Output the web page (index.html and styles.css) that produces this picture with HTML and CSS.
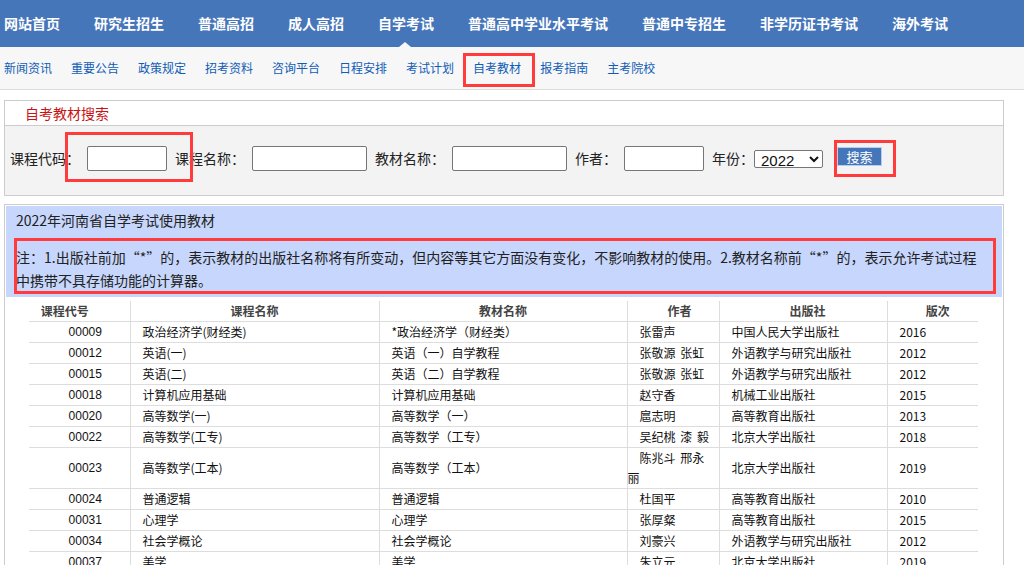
FILE: index.html
```html
<!DOCTYPE html>
<html lang="zh-CN">
<head>
<meta charset="utf-8">
<title>自考教材</title>
<link rel="stylesheet" href="styles.css">
</head>
<body>
<header class="topnav">
  <ul class="topnav-list">
    <li class="topnav-item">网站首页</li>
    <li class="topnav-item">研究生招生</li>
    <li class="topnav-item">普通高招</li>
    <li class="topnav-item">成人高招</li>
    <li class="topnav-item active">自学考试</li>
    <li class="topnav-item">普通高中学业水平考试</li>
    <li class="topnav-item">普通中专招生</li>
    <li class="topnav-item">非学历证书考试</li>
    <li class="topnav-item">海外考试</li>
  </ul>
</header>
<nav class="subnav">
  <a class="subnav-link" href="#">新闻资讯</a>
  <a class="subnav-link" href="#">重要公告</a>
  <a class="subnav-link" href="#">政策规定</a>
  <a class="subnav-link" href="#">招考资料</a>
  <a class="subnav-link" href="#">咨询平台</a>
  <a class="subnav-link" href="#">日程安排</a>
  <a class="subnav-link" href="#">考试计划</a>
  <a class="subnav-link" href="#">自考教材</a>
  <a class="subnav-link" href="#">报考指南</a>
  <a class="subnav-link" href="#">主考院校</a>
</nav>
<main class="content">
  <section class="search-panel">
    <h2 class="panel-title">自考教材搜索</h2>
    <form class="search-form">
      <label class="field-label">课程代码：</label><input class="field field-sm" type="text">
      <label class="field-label">课程名称：</label><input class="field field-lg" type="text">
      <label class="field-label">教材名称：</label><input class="field field-lg" type="text">
      <label class="field-label">作者：</label><input class="field field-sm" type="text">
      <label class="field-label field-label-year">年份：</label><select class="year-select"><option>2022</option><option>2021</option></select>
      <button class="search-btn" type="button">搜索</button>
    </form>
  </section>
  <section class="results">
    <div class="results-info">
      <p class="results-title">2022年河南省自学考试使用教材</p>
      <p class="results-note">注：1.出版社前加“*”的，表示教材的出版社名称将有所变动，但内容等其它方面没有变化，不影响教材的使用。2.教材名称前“*”的，表示允许考试过程<br>中携带不具存储功能的计算器。</p>
    </div>
    <table class="book-table">
      <colgroup>
        <col class="w-code"><col class="w-course"><col class="w-book"><col class="w-author"><col class="w-press"><col class="w-ed">
      </colgroup>
      <thead>
        <tr>
          <th class="th-code">课程代号</th>
          <th>课程名称</th>
          <th>教材名称</th>
          <th class="th-author">作者</th>
          <th class="th-press">出版社</th>
          <th class="th-ed">版次</th>
        </tr>
      </thead>
      <tbody>
        <tr><td class="td-code">00009</td><td>政治经济学(财经类)</td><td>*政治经济学（财经类）</td><td class="td-author">张雷声</td><td>中国人民大学出版社</td><td>2016</td></tr>
        <tr><td class="td-code">00012</td><td>英语(一)</td><td>英语（一）自学教程</td><td class="td-author">张敬源 张虹</td><td>外语教学与研究出版社</td><td>2012</td></tr>
        <tr><td class="td-code">00015</td><td>英语(二)</td><td>英语（二）自学教程</td><td class="td-author">张敬源 张虹</td><td>外语教学与研究出版社</td><td>2012</td></tr>
        <tr><td class="td-code">00018</td><td>计算机应用基础</td><td>计算机应用基础</td><td class="td-author">赵守香</td><td>机械工业出版社</td><td>2015</td></tr>
        <tr><td class="td-code">00020</td><td>高等数学(一)</td><td>高等数学（一）</td><td class="td-author">扈志明</td><td>高等教育出版社</td><td>2013</td></tr>
        <tr><td class="td-code">00022</td><td>高等数学(工专)</td><td>高等数学（工专）</td><td class="td-author">吴纪桃 漆 毅</td><td>北京大学出版社</td><td>2018</td></tr>
        <tr><td class="td-code">00023</td><td>高等数学(工本)</td><td>高等数学（工本）</td><td class="td-author">陈兆斗 邢永丽</td><td>北京大学出版社</td><td>2019</td></tr>
        <tr><td class="td-code">00024</td><td>普通逻辑</td><td>普通逻辑</td><td class="td-author">杜国平</td><td>高等教育出版社</td><td>2010</td></tr>
        <tr><td class="td-code">00031</td><td>心理学</td><td>心理学</td><td class="td-author">张厚粲</td><td>高等教育出版社</td><td>2015</td></tr>
        <tr><td class="td-code">00034</td><td>社会学概论</td><td>社会学概论</td><td class="td-author">刘豪兴</td><td>外语教学与研究出版社</td><td>2012</td></tr>
        <tr><td class="td-code">00037</td><td>美学</td><td>美学</td><td class="td-author">朱立元</td><td>北京大学出版社</td><td>2019</td></tr>
      </tbody>
    </table>
  </section>
</main>
<div class="mark mark-subnav"></div>
<div class="mark mark-code"></div>
<div class="mark mark-btn"></div>
<div class="mark mark-note"></div>
</body>
</html>
```

FILE: styles.css
```css
* {
  box-sizing: border-box;
}

html,
body {
  margin: 0;
  padding: 0;
}

html {
  overflow: hidden;
}

body {
  position: relative;
  width: 1024px;
  font-family: "Noto Sans CJK SC", "Liberation Sans", sans-serif;
  color: #222;
  background: #fff;
}

/* top navigation */
.topnav {
  height: 47px;
  background: #4676ba;
}

.topnav-list {
  display: flex;
  gap: 34px;
  height: 47px;
  margin: 0;
  padding: 0 0 0 4px;
  list-style: none;
}

.topnav-item {
  position: relative;
  color: #fff;
  font-size: 14px;
  font-weight: bold;
  line-height: 46px;
  white-space: nowrap;
}

.topnav-item.active::after {
  content: "";
  position: absolute;
  left: 50%;
  bottom: 0;
  margin-left: -7px;
  border-left: 6px solid transparent;
  border-right: 6px solid transparent;
  border-bottom: 5px solid #f7f7f7;
}

/* sub navigation */
.subnav {
  display: flex;
  gap: 19px;
  height: 43px;
  padding-left: 4px;
  background: #f7f7f7;
  border-bottom: 1px solid #dcdcdc;
}

.subnav-link {
  font-size: 12px;
  line-height: 42px;
  color: #105cb6;
  text-decoration: none;
  white-space: nowrap;
}

/* content */
.content {
  padding: 10px 0 0 4px;
}

.search-panel {
  width: 1000px;
  border: 1px solid #ccc;
}

.panel-title {
  margin: 0;
  height: 25px;
  padding-left: 20px;
  font-size: 14px;
  font-weight: normal;
  line-height: 24px;
  color: #c81414;
  background: #fff;
  border-bottom: 1px solid #ccc;
}

.search-form {
  display: flex;
  align-items: center;
  height: 69px;
  padding: 0 0 4px 5px;
  background: #f3f3f3;
}

.field-label {
  font-size: 14px;
  line-height: 25px;
  color: #222;
  margin-right: 7px;
  white-space: nowrap;
}

.field-label-year {
  margin-right: 0;
}

.field {
  height: 25px;
  margin: 0 8px 0 0;
  padding: 0 3px;
  border: 1px solid #767676;
  border-radius: 2px;
  background: #fff;
}

.field-sm {
  width: 80px;
}

.field-lg {
  width: 115px;
}

.year-select {
  width: 69px;
  height: 18px;
  margin: 0;
  padding: 0 0 0 2px;
  font-family: "Liberation Sans", sans-serif;
  font-size: 15px;
  color: #111;
  border: 1px solid #767676;
  border-radius: 2px;
  background: #fff;
}

.search-btn {
  width: 45px;
  height: 19px;
  margin: 0 0 4px 14px;
  padding: 0;
  font-family: "Noto Sans CJK SC", sans-serif;
  font-size: 13px;
  line-height: 17px;
  color: #fff;
  background: #4676ba;
  border: 1px solid #b7cdf0;
}

/* results */
.results {
  width: 1000px;
  margin-top: 8px;
  padding: 1px;
  border: 1px solid #ccc;
  border-bottom: none;
}

.results-info {
  padding: 0 0 5px 10px;
  background: #c6d6fc;
}

.results-title {
  margin: 0;
  height: 28px;
  font-size: 14px;
  line-height: 28px;
  color: #222;
}

.results-note {
  margin: 12px 0 0;
  font-size: 14px;
  line-height: 23px;
  color: #222;
  white-space: nowrap;
}

.book-table {
  width: 949px;
  margin: 4px 0 0 23px;
  border-collapse: collapse;
  table-layout: fixed;
  font-size: 12px;
}

.w-code { width: 101px; }
.w-course { width: 249px; }
.w-book { width: 248px; }
.w-author { width: 92px; }
.w-press { width: 168px; }
.w-ed { width: 91px; }

.book-table th {
  height: 20px;
  padding: 0;
  font-weight: bold;
  line-height: 20px;
  color: #444;
  text-align: center;
  border-left: 1px solid #ddd;
  border-bottom: 1px solid #ddd;
}

.book-table th:first-child,
.book-table td:first-child {
  border-left: none;
}

.book-table .th-code { padding-right: 29px; }
.book-table .th-author { padding-left: 13px; }
.book-table .th-press { padding-left: 9px; }
.book-table .th-ed { padding-left: 10px; }

.book-table td {
  height: 20px;
  padding: 0;
  line-height: 20px;
  text-indent: 12px;
  color: #111;
  vertical-align: middle;
  border-left: 1px solid #ddd;
  border-bottom: 1px solid #ddd;
}

.book-table .td-code {
  text-align: center;
  font-family: "Liberation Sans", "Noto Sans CJK SC", sans-serif;
}

.book-table .td-author {
  padding-right: 7px;
  word-spacing: 2px;
}

/* red annotation frames drawn over the page */
.mark {
  position: absolute;
  border: 3px solid #ff3b3b;
  pointer-events: none;
}

.mark-subnav { left: 463px; top: 53px; width: 72px; height: 34px; }
.mark-code { left: 65px; top: 132px; width: 128px; height: 50px; }
.mark-btn { left: 834px; top: 140px; width: 62px; height: 37px; }
.mark-note { left: 14px; top: 238px; width: 982px; height: 56px; }
```
